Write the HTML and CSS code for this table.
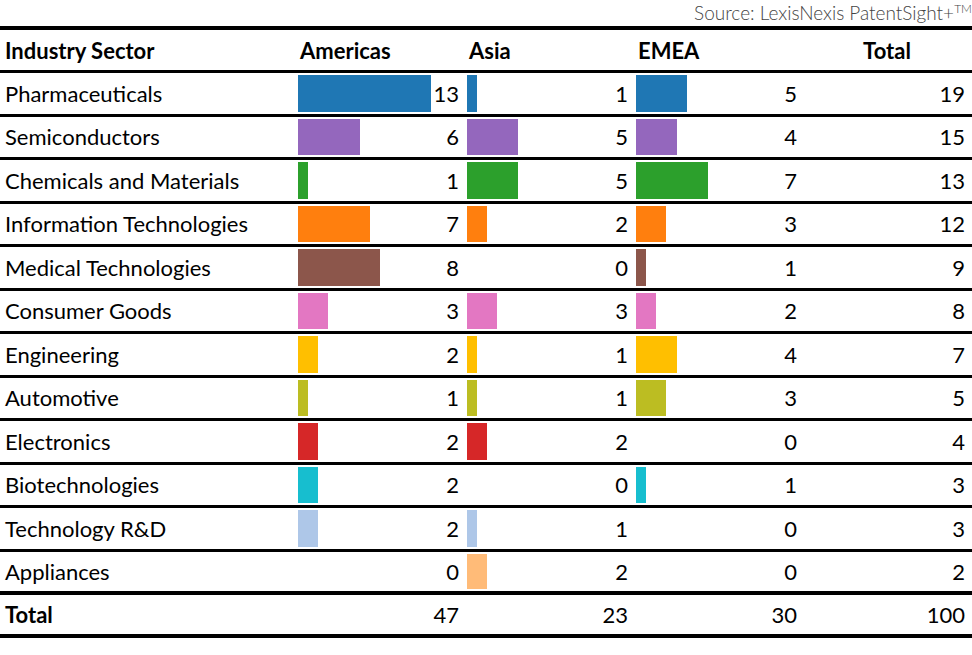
FILE: index.html
```html
<!DOCTYPE html>
<html lang="en">
<head>
<meta charset="utf-8">
<title>Industry Sector by Region</title>
<link rel="stylesheet" href="styles.css">
</head>
<body>
<div class="source">Source: LexisNexis PatentSight+<sup class="tm">TM</sup></div>
<div class="table">
  <div class="row head">
    <div class="cell name">Industry Sector</div>
    <div class="cell hcol">Americas</div>
    <div class="cell hcol">Asia</div>
    <div class="cell hcol">EMEA</div>
    <div class="cell htotal">Total</div>
  </div>

  <div class="row">
    <div class="cell name">Pharmaceuticals</div>
    <div class="cell val"><span class="bar c1" style="width:133px"></span><span class="num">13</span></div>
    <div class="cell val"><span class="bar c1" style="width:10px"></span><span class="num">1</span></div>
    <div class="cell val"><span class="bar c1" style="width:51px"></span><span class="num">5</span></div>
    <div class="cell total">19</div>
  </div>
  <div class="row">
    <div class="cell name">Semiconductors</div>
    <div class="cell val"><span class="bar c2" style="width:62px"></span><span class="num">6</span></div>
    <div class="cell val"><span class="bar c2" style="width:51px"></span><span class="num">5</span></div>
    <div class="cell val"><span class="bar c2" style="width:41px"></span><span class="num">4</span></div>
    <div class="cell total">15</div>
  </div>
  <div class="row">
    <div class="cell name">Chemicals and Materials</div>
    <div class="cell val"><span class="bar c3" style="width:10px"></span><span class="num">1</span></div>
    <div class="cell val"><span class="bar c3" style="width:51px"></span><span class="num">5</span></div>
    <div class="cell val"><span class="bar c3" style="width:72px"></span><span class="num">7</span></div>
    <div class="cell total">13</div>
  </div>
  <div class="row">
    <div class="cell name">Information Technologies</div>
    <div class="cell val"><span class="bar c4" style="width:72px"></span><span class="num">7</span></div>
    <div class="cell val"><span class="bar c4" style="width:20px"></span><span class="num">2</span></div>
    <div class="cell val"><span class="bar c4" style="width:30px"></span><span class="num">3</span></div>
    <div class="cell total">12</div>
  </div>
  <div class="row">
    <div class="cell name">Medical Technologies</div>
    <div class="cell val"><span class="bar c5" style="width:82px"></span><span class="num">8</span></div>
    <div class="cell val"><span class="num">0</span></div>
    <div class="cell val"><span class="bar c5" style="width:10px"></span><span class="num">1</span></div>
    <div class="cell total">9</div>
  </div>
  <div class="row">
    <div class="cell name">Consumer Goods</div>
    <div class="cell val"><span class="bar c6" style="width:30px"></span><span class="num">3</span></div>
    <div class="cell val"><span class="bar c6" style="width:30px"></span><span class="num">3</span></div>
    <div class="cell val"><span class="bar c6" style="width:20px"></span><span class="num">2</span></div>
    <div class="cell total">8</div>
  </div>
  <div class="row">
    <div class="cell name">Engineering</div>
    <div class="cell val"><span class="bar c7" style="width:20px"></span><span class="num">2</span></div>
    <div class="cell val"><span class="bar c7" style="width:10px"></span><span class="num">1</span></div>
    <div class="cell val"><span class="bar c7" style="width:41px"></span><span class="num">4</span></div>
    <div class="cell total">7</div>
  </div>
  <div class="row">
    <div class="cell name">Automotive</div>
    <div class="cell val"><span class="bar c8" style="width:10px"></span><span class="num">1</span></div>
    <div class="cell val"><span class="bar c8" style="width:10px"></span><span class="num">1</span></div>
    <div class="cell val"><span class="bar c8" style="width:30px"></span><span class="num">3</span></div>
    <div class="cell total">5</div>
  </div>
  <div class="row">
    <div class="cell name">Electronics</div>
    <div class="cell val"><span class="bar c9" style="width:20px"></span><span class="num">2</span></div>
    <div class="cell val"><span class="bar c9" style="width:20px"></span><span class="num">2</span></div>
    <div class="cell val"><span class="num">0</span></div>
    <div class="cell total">4</div>
  </div>
  <div class="row">
    <div class="cell name">Biotechnologies</div>
    <div class="cell val"><span class="bar c10" style="width:20px"></span><span class="num">2</span></div>
    <div class="cell val"><span class="num">0</span></div>
    <div class="cell val"><span class="bar c10" style="width:10px"></span><span class="num">1</span></div>
    <div class="cell total">3</div>
  </div>
  <div class="row">
    <div class="cell name">Technology R&amp;D</div>
    <div class="cell val"><span class="bar c11" style="width:20px"></span><span class="num">2</span></div>
    <div class="cell val"><span class="bar c11" style="width:10px"></span><span class="num">1</span></div>
    <div class="cell val"><span class="num">0</span></div>
    <div class="cell total">3</div>
  </div>
  <div class="row last">
    <div class="cell name">Appliances</div>
    <div class="cell val"><span class="num">0</span></div>
    <div class="cell val"><span class="bar c12" style="width:20px"></span><span class="num">2</span></div>
    <div class="cell val"><span class="num">0</span></div>
    <div class="cell total">2</div>
  </div>

  <div class="row foot">
    <div class="cell name">Total</div>
    <div class="cell val"><span class="num">47</span></div>
    <div class="cell val"><span class="num">23</span></div>
    <div class="cell val"><span class="num">30</span></div>
    <div class="cell total">100</div>
  </div>
</div>
</body>
</html>
```

FILE: styles.css
```css
html, body {
  margin: 0;
  padding: 0;
  background: #fff;
}
body {
  font-family: Lato, "Open Sans", sans-serif;
  color: #000;
  overflow: hidden;
  width: 972px;
}
.source {
  height: 26px;
  box-sizing: border-box;
  padding-top: 3px;
  text-align: right;
  font-weight: 300;
  font-size: 19px;
  line-height: 20px;
  color: #444;
  white-space: nowrap;
}
.tm {
  font-size: 12px;
  vertical-align: 7px;
  line-height: 0;
}
.table {
  border-top: 4px solid #000;
}
.row {
  display: grid;
  grid-template-columns: 295px 169px 169px 169px 170px;
  height: 43.5px;
  box-sizing: border-box;
  border-bottom: 3px solid #000;
  font-size: 22px;
}
.row.head {
  height: 43px;
  font-weight: 700;
}
.row.last {
  border-bottom-width: 4px;
}
.row.foot {
  height: 43px;
  border-bottom-width: 4px;
}
.row.foot .name {
  font-weight: 700;
}
.cell {
  display: flex;
  align-items: center;
  min-width: 0;
}
.name {
  padding-left: 5px;
}
.hcol {
  padding-left: 5px;
}
.htotal {
  justify-content: center;
}
.val {
  padding: 2px 5px 2px 3px;
  align-items: stretch;
}
.val .num {
  margin-left: auto;
  padding-left: 1px;
  display: flex;
  align-items: center;
}
.bar {
  display: block;
  flex: none;
}
.total {
  justify-content: flex-end;
  padding-right: 7px;
}
.c1 { background: #1f77b4; }
.c2 { background: #9467bd; }
.c3 { background: #2ca02c; }
.c4 { background: #ff7f0e; }
.c5 { background: #8c564b; }
.c6 { background: #e377c2; }
.c7 { background: #ffbf00; }
.c8 { background: #bcbd22; }
.c9 { background: #d62728; }
.c10 { background: #17becf; }
.c11 { background: #aec7e8; }
.c12 { background: #ffbb78; }
```
